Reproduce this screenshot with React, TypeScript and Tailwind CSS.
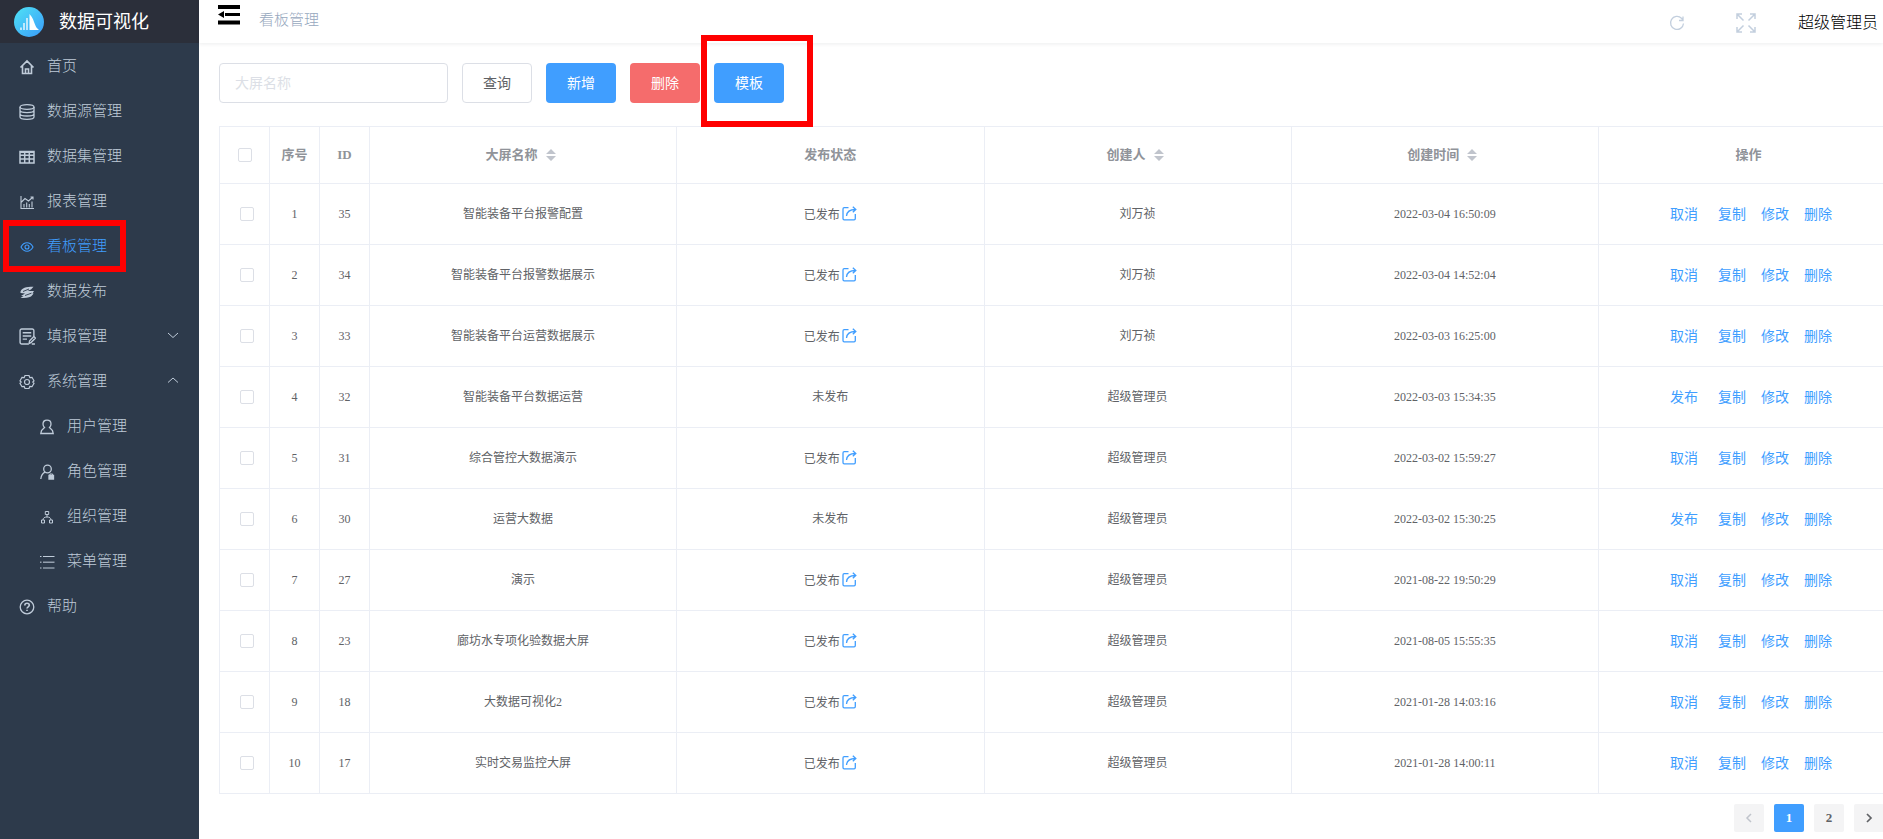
import type { ReactNode } from "react";

const LINK = "text-[#409eff]";

interface MenuItem {
  label: string;
  icon: ReactNode;
  active?: boolean;
  nested?: boolean;
  arrow?: "up" | "down";
}

function Icon({ size = 16, width = 1.3, children }: { size?: number; width?: number; children: ReactNode }) {
  return (
    <svg
      width={size}
      height={size}
      viewBox="0 0 16 16"
      fill="none"
      stroke="currentColor"
      strokeWidth={width}
      className="shrink-0"
      aria-hidden="true"
    >
      {children}
    </svg>
  );
}

const icons = {
  home: (
    <Icon width={1.6}>
      <path d="M1.5 8.5 8 2l6.5 6.5M3.5 7v7.5h9V7M6.5 14.5V10h3v4.5" />
    </Icon>
  ),
  database: (
    <Icon>
      <ellipse cx="8" cy="3" rx="7" ry="2.3" />
      <path d="M1 3v10c0 1.3 3.1 2.3 7 2.3s7-1 7-2.3V3M1 6.3c0 1.3 3.1 2.3 7 2.3s7-1 7-2.3M1 9.7c0 1.3 3.1 2.3 7 2.3s7-1 7-2.3" />
    </Icon>
  ),
  grid: (
    <Icon width={1.5}>
      <path d="M1 2.5h14V14H1zM1 6.2h14M1 10h14M5.7 2.5V14M10.3 2.5V14" />
      <path d="M1 3h14" strokeWidth="2" />
    </Icon>
  ),
  chart: (
    <Icon width={1.1}>
      <path d="M2 2v12.5h13M2.5 8 6 4.5 9.500 7 14 3M11.5 3H14v2.5M5 13.500V10M7.700 13.500v-5M10.300 13.500V10M13 13.500v-6" />
    </Icon>
  ),
  eye: (
    <Icon width={1.1}>
      <path d="M2 8c1.500-2.800 3.500-4.200 6-4.200S12.500 5.200 14 8c-1.500 2.800-3.500 4.200-6 4.200S3.500 10.800 2 8Z" />
      <circle cx="8" cy="8" r="2" />
    </Icon>
  ),
  publish: (
    <Icon>
      <path
        d="M1.500 7.500C3 4 6.500 2.700 14.500 2.700L12 5.500 8.500 7H15l-1.500 2.500h1.200L12 12.500C9.500 14 6 14 1.500 14L4.500 12H2L6 9.500 1.500 9Z"
        fill="currentColor"
        stroke="none"
      />
      <path d="M4 7.500 10 5M6 11.500l6.500-2.300" className="stroke-[#2d3a4b]" strokeWidth="0.9" />
    </Icon>
  ),
  form: (
    <Icon size={17}>
      <path d="M9 15H2.500A1.500 1.500 0 0 1 1 13.500v-11A1.500 1.500 0 0 1 2.500 1h10A1.500 1.500 0 0 1 14 2.500V8M3.500 4.500h8M3.500 7.500h8M3.500 10.500h4" />
      <path d="m9.500 14.500.5-2.500 4-4 1.500 1.500-4 4ZM12 15h3" />
    </Icon>
  ),
  gear: (
    <Icon width={1.2}>
      <path d="M6 1.500h4l.8 2 2.200-.2 2 3.500L13.800 8l1.200 1.300-2 3.400-2.200-.2-.8 2H6l-.8-2-2.200.2-2-3.400L2.200 8 1 6.800l2-3.500 2.200.2Z" />
      <circle cx="8" cy="8" r="2.500" />
    </Icon>
  ),
  user: (
    <Icon>
      <path d="M5.500 8.500C4.300 7.500 4 6.300 4 5c0-2.400 1.700-3.800 4-3.800S12 2.600 12 5c0 1.300-.3 2.500-1.500 3.500l3 3 .7 3H1.800l.7-3Z" />
    </Icon>
  ),
  role: (
    <Icon>
      <circle cx="8.500" cy="5" r="3.800" />
      <path d="M1.800 15c.3-3.500 1.700-5.500 4.200-6.800" />
      <path d="M10 11.500h4.500V15H10z" fill="currentColor" />
      <path d="M10.900 11.500V10h2.700v1.500" strokeWidth="1" />
    </Icon>
  ),
  org: (
    <Icon width={1}>
      <path d="M6.300 2.500h3.400v3H6.300zM2.500 11h3v3h-3zM10.500 11h3v3h-3zM8 5.500V8M4 11c0-2 1.500-3 4-3s4 1 4 3" />
    </Icon>
  ),
  list: (
    <Icon width={1}>
      <path d="M4 2.500h11.500M4 14h11.500M1 2.500h1.500M1 14h1.500" />
      <path d="M4 8.200h11.500M1 8.200h1.500" strokeWidth="1.500" strokeOpacity="0.7" />
    </Icon>
  ),
  help: (
    <Icon>
      <circle cx="8" cy="8" r="6.800" />
      <path d="M5.800 6.500c0-1.300.9-2.200 2.200-2.200s2.300.8 2.300 2C10.300 7.700 8 7.900 8 9.500M8 10.700v1.400" strokeWidth="1.6" />
    </Icon>
  ),
};

const menu: MenuItem[] = [
  { label: "首页", icon: icons.home },
  { label: "数据源管理", icon: icons.database },
  { label: "数据集管理", icon: icons.grid },
  { label: "报表管理", icon: icons.chart },
  { label: "看板管理", icon: icons.eye, active: true },
  { label: "数据发布", icon: icons.publish },
  { label: "填报管理", icon: icons.form, arrow: "down" },
  { label: "系统管理", icon: icons.gear, arrow: "up" },
  { label: "用户管理", icon: icons.user, nested: true },
  { label: "角色管理", icon: icons.role, nested: true },
  { label: "组织管理", icon: icons.org, nested: true },
  { label: "菜单管理", icon: icons.list, nested: true },
  { label: "帮助", icon: icons.help },
];

const rows = [
  { id: 35, name: "智能装备平台报警配置", published: true, creator: "刘万祯", time: "2022-03-04 16:50:09" },
  { id: 34, name: "智能装备平台报警数据展示", published: true, creator: "刘万祯", time: "2022-03-04 14:52:04" },
  { id: 33, name: "智能装备平台运营数据展示", published: true, creator: "刘万祯", time: "2022-03-03 16:25:00" },
  { id: 32, name: "智能装备平台数据运营", published: false, creator: "超级管理员", time: "2022-03-03 15:34:35" },
  { id: 31, name: "综合管控大数据演示", published: true, creator: "超级管理员", time: "2022-03-02 15:59:27" },
  { id: 30, name: "运营大数据", published: false, creator: "超级管理员", time: "2022-03-02 15:30:25" },
  { id: 27, name: "演示", published: true, creator: "超级管理员", time: "2021-08-22 19:50:29" },
  { id: 23, name: "廊坊水专项化验数据大屏", published: true, creator: "超级管理员", time: "2021-08-05 15:55:35" },
  { id: 18, name: "大数据可视化2", published: true, creator: "超级管理员", time: "2021-01-28 14:03:16" },
  { id: 17, name: "实时交易监控大屏", published: true, creator: "超级管理员", time: "2021-01-28 14:00:11" },
];

function Logo() {
  return (
    <svg width="30" height="30" viewBox="0 0 30 30" aria-hidden="true">
      <defs>
        <linearGradient id="logo" x1="0" y1="0" x2="1" y2="1">
          <stop offset="0" stopColor="#4fe3f5" />
          <stop offset="1" stopColor="#3a9bfa" />
        </linearGradient>
      </defs>
      <circle cx="15" cy="15" r="15" fill="url(#logo)" />
      <path d="M15.500 7v16h9.500c-2-1.500-3-3-4-5.500-1.400-3.500-2-7-5.500-10.500Z" fill="#fff" />
      <path d="M13 11v12M10 16v7M7 20.500V23" stroke="#fff" strokeWidth="1.3" />
    </svg>
  );
}

function Sidebar() {
  return (
    <aside className="w-[199px] shrink-0 bg-[#2d3a4b]">
      <div className="flex h-[43px] items-center gap-[15px] bg-[#2b2f3a] pl-[14px] text-lg text-white">
        <Logo />
        <span>数据可视化</span>
      </div>
      <nav className="text-[15px] font-light text-[#bfcbd9]">
        {menu.map((item) => (
          <a
            key={item.label}
            href="#"
            className={`relative flex h-[45px] items-center gap-3 pt-[2px] pr-5 ${item.nested ? "pl-[39px]" : "pl-[19px]"} ${item.active ? LINK : ""}`}
          >
            <span className="flex w-4 justify-center">{item.icon}</span>
            <span>{item.label}</span>
            {item.arrow && (
              <svg width="12" height="12" viewBox="0 0 12 12" fill="none" stroke="currentColor" className="mb-[2px] ml-auto" aria-hidden="true">
                <path d={item.arrow === "down" ? "m1 3 5 4.500L11 3" : "m1 7.500 5-4.500 5 4.500"} />
              </svg>
            )}
            {item.active && <span className="absolute top-[-3px] left-[3px] h-[52px] w-[123px] border-6 border-[#ff0000]" />}
          </a>
        ))}
      </nav>
    </aside>
  );
}

function TopBar() {
  return (
    <header className="flex h-[43px] items-center pr-[5px] shadow-[0_1px_4px_rgba(0,21,41,0.08)]">
      <button type="button" aria-label="收起菜单" className="ml-[19px] self-start pt-[5px]">
        <svg width="22" height="20" viewBox="0 0 22 20" className="block" aria-hidden="true">
          <path d="M0 0h22v4H0zM7 8h15v3H7zM0 15.500h22v4H0zM6 6v7L0 9.500Z" />
        </svg>
      </button>
      <span className="ml-[19px] pb-[3px] text-[15px] font-light text-[#97a8be]">看板管理</span>
      <div className="ml-auto flex items-center pt-[2px]">
        <button type="button" aria-label="刷新" className="text-[#c3cfde]">
          <svg width="16" height="16" viewBox="0 0 16 16" fill="none" stroke="currentColor" strokeWidth="1.3" aria-hidden="true">
            <path d="M14.500 8.500a6.500 6.500 0 1 1-2-5.300L13.500 4.500M14 1.500v4h-4" />
          </svg>
        </button>
        <button type="button" aria-label="全屏" className="ml-[51px] text-[#c3cfde]">
          <svg width="20" height="20" viewBox="0 0 20 20" fill="none" stroke="currentColor" strokeWidth="1.5" aria-hidden="true">
            <path d="M1 6V1h5M14 1h5v5M19 14v5h-5M6 19H1v-5M1 1l6.500 6.500M19 1l-6.500 6.500M19 19l-6.500-6.500M1 19l6.500-6.500" />
          </svg>
        </button>
        <span className="ml-[42px] text-base font-light text-black">超级管理员</span>
      </div>
    </header>
  );
}

function SortIcon() {
  return (
    <svg width="10" height="12" viewBox="0 0 10 12" className="mr-[5px] mb-[3px] ml-2 inline-block fill-[#c0c4cc]" aria-hidden="true">
      <path d="M5 0l5 5H0zM5 12l5-5H0z" />
    </svg>
  );
}

function ShareIcon() {
  return (
    <svg width="15" height="15" viewBox="0 0 15 15" fill="none" stroke="#409eff" strokeWidth="1.3" aria-hidden="true">
      <path d="M6.500 1.700H2.200A1.200 1.200 0 0 0 1 2.900v9.700a1.200 1.200 0 0 0 1.200 1.200h9.900a1.200 1.200 0 0 0 1.200-1.200V8M4.500 10c.3-4 3-6.500 9-6.500M10.800.8l3 2.700-3 2.700" />
    </svg>
  );
}

function Check({ label }: { label: string }) {
  return (
    <input
      type="checkbox"
      aria-label={label}
      className="block size-[14px] appearance-none rounded-[2px] border border-[#dcdfe6] bg-white checked:bg-[#409eff]"
    />
  );
}

function BoardTable() {
  const th = "border border-[#ebeef5] p-0 font-bold";
  const td = "border border-[#ebeef5] p-0";
  return (
    <table className="w-full table-fixed border-collapse text-center text-xs text-[#606266]">
      <colgroup>
        <col className="w-[50px]" />
        <col className="w-[50px]" />
        <col className="w-[50px]" />
        <col />
        <col />
        <col />
        <col />
        <col className="w-[300px]" />
      </colgroup>
      <thead className="text-[13px] text-[#909399]">
        <tr className="h-[57px]">
          <th className={`${th} pl-[18px]`}>
            <Check label="全选" />
          </th>
          <th className={th}>序号</th>
          <th className={th}>ID</th>
          <th className={th}>大屏名称<SortIcon /></th>
          <th className={th}>发布状态</th>
          <th className={th}>创建人<SortIcon /></th>
          <th className={th}>创建时间<SortIcon /></th>
          <th className={th}>操作</th>
        </tr>
      </thead>
      <tbody>
        {rows.map((row, i) => (
          <tr key={row.id} className="h-[61px]">
            <td className={`${td} pl-5`}>
              <Check label={row.name} />
            </td>
            <td className={td}>{i + 1}</td>
            <td className={td}>{row.id}</td>
            <td className={td}>{row.name}</td>
            <td className={td}>
              <span className="inline-flex items-center">
                <span className={row.published ? "pt-[2px]" : ""}>{row.published ? "已发布" : "未发布"}</span>
                {row.published && (
                  <a href="#" aria-label="查看大屏" className="ml-[2px] pb-px">
                    <ShareIcon />
                  </a>
                )}
              </span>
            </td>
            <td className={td}>{row.creator}</td>
            <td className={td}>{row.time}</td>
            <td className={td}>
              <div className={`flex justify-center gap-[15px] pt-[2px] pl-[5px] text-sm ${LINK}`}>
                <button type="button" className="mr-[5px]">{row.published ? "取消" : "发布"}</button>
                <button type="button">复制</button>
                <button type="button">修改</button>
                <button type="button">删除</button>
              </div>
            </td>
          </tr>
        ))}
      </tbody>
    </table>
  );
}

function Pagination() {
  const page = "flex h-7 w-[30px] items-center justify-center rounded-[2px]";
  return (
    <div className="mt-[10px] flex justify-end gap-[10px] pr-[15px] text-[13px] font-bold text-[#606266]">
      <button type="button" aria-label="上一页" disabled className={`${page} bg-[#f4f4f5] text-[#c0c4cc]`}>
        <svg width="12" height="12" viewBox="0 0 12 12" fill="none" stroke="currentColor" strokeWidth="1.5" aria-hidden="true">
          <path d="M8 2 4 6l4 4" />
        </svg>
      </button>
      <button type="button" className={`${page} bg-[#409eff] text-white`}>1</button>
      <button type="button" className={`${page} bg-[#f4f4f5]`}>2</button>
      <button type="button" aria-label="下一页" className={`${page} bg-[#f4f4f5]`}>
        <svg width="12" height="12" viewBox="0 0 12 12" fill="none" stroke="currentColor" strokeWidth="1.7" aria-hidden="true">
          <path d="m4 2 4 4-4 4" />
        </svg>
      </button>
    </div>
  );
}

export default function App() {
  const button = "h-10 w-[70px] rounded pt-[2px] text-sm";
  return (
    <div className="flex min-h-screen overflow-hidden bg-white font-['Liberation_Serif','Noto_Sans_CJK_SC',serif]">
      <Sidebar />
      <div className="min-w-0 flex-1">
        <TopBar />
        <main className="-mr-[16px] pt-5 pl-5">
          <form className="mb-[23px] flex gap-[14px]" onSubmit={(e) => e.preventDefault()}>
            <input
              type="text"
              aria-label="大屏名称"
              placeholder="大屏名称"
              className="h-10 w-[229px] rounded border border-[#dcdfe6] px-[15px] pt-[2px] text-sm outline-none placeholder:text-[#dcdfe6]"
            />
            <button type="submit" className={`${button} border border-[#dcdfe6] bg-white text-[#606266]`}>查询</button>
            <button type="button" className={`${button} bg-[#409eff] text-white`}>新增</button>
            <button type="button" className={`${button} bg-[#f56c6c] text-white`}>删除</button>
            <div className="relative">
              <button type="button" className={`${button} bg-[#409eff] text-white`}>模板</button>
              <span className="absolute top-[-28px] left-[-13px] h-[92px] w-[112px] border-6 border-[#ff0000]" />
            </div>
          </form>
          <BoardTable />
          <Pagination />
        </main>
      </div>
    </div>
  );
}
